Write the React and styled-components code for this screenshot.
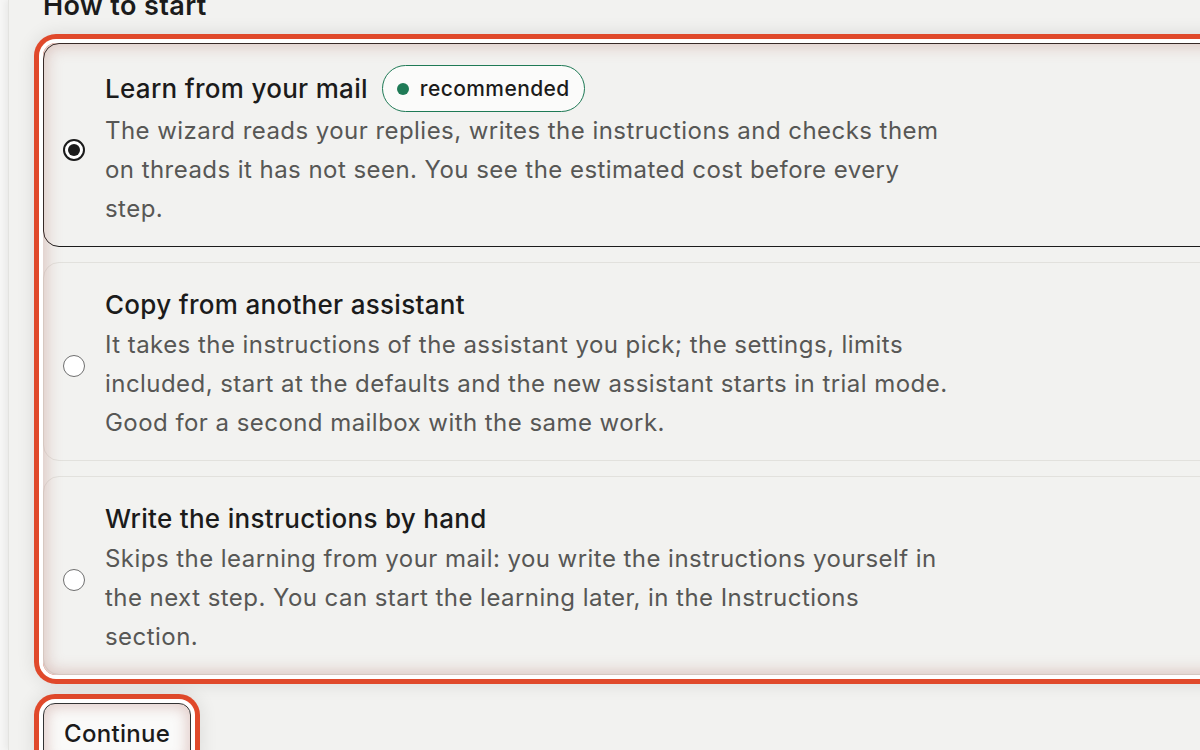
import React, { useState } from 'react'
import styled, { createGlobalStyle } from 'styled-components'

/* ========================================================================== */
const GlobalStyle = createGlobalStyle`
  html, body {
    margin: 0;
    height: 100%;
    overflow: hidden;
    background: #f6f6f5;
  }
  body {
    font-family: Inter, "Noto Sans", "Liberation Sans", sans-serif;
    color: #1b1b1b;
  }
`
const Page = styled.div`
  height: 750px;
  margin-left: 8px;
  padding-left: 34px;
  background: #f2f2f0;
  border-left: 1px solid #e3e3e0;
  box-shadow: -3px 0 6px rgba(0, 0, 0, 0.05);
  overflow: hidden;
`
const Heading = styled.h2`
  margin: -9px 0 22px 0;
  font-size: 27px;
  line-height: 30px;
  font-weight: 600;
  letter-spacing: 0.4px;
  color: #1b1b1b;
`
const OptionGroup = styled.div`
  position: relative;
  width: 1230px;
  display: flex;
  flex-direction: column;
  gap: 15px;
  border-radius: 13px;

  &::after {
    content: '';
    position: absolute;
    inset: 0;
    border-radius: 13px;
    pointer-events: none;
    box-shadow:
      0 0 0 4px #ffffff,
      0 0 0 9px #e0492b,
      0 0 18px 10px rgba(0, 0, 0, 0.09),
      inset 0 0 16px 3px rgba(170, 95, 85, 0.32);
  }
`
const OptionCard = styled.label`
  display: flex;
  align-items: center;
  gap: 20px;
  padding: 22px 19px 18px;
  border-radius: 16px;
  border: ${p => (p.$selected ? '1.5px solid #1c1c1c' : '1px solid #e2e1dd')};
  background: #f2f2f0;
  cursor: pointer;
`
const Radio = styled.span`
  flex-shrink: 0;
  box-sizing: border-box;
  width: 22px;
  height: 22px;
  margin-top: 5px;
  border-radius: 50%;
  background: #ffffff;
  border: ${p => (p.$checked ? '2px solid #1b1b1b' : '1.5px solid #6f6f6f')};
  display: flex;
  align-items: center;
  justify-content: center;

  &::after {
    content: '';
    display: ${p => (p.$checked ? 'block' : 'none')};
    width: 12px;
    height: 12px;
    border-radius: 50%;
    background: #1b1b1b;
  }
`
const OptionBody = styled.div`
  display: flex;
  flex-direction: column;
`
const TitleRow = styled.div`
  display: flex;
  align-items: center;
  gap: 14px;
  min-height: 40px;
`
const Title = styled.span`
  font-size: 26px;
  line-height: 40px;
  font-weight: 500;
  letter-spacing: 0.3px;
  color: #1b1b1b;
`
const Badge = styled.span`
  display: inline-flex;
  align-items: center;
  gap: 11px;
  box-sizing: border-box;
  height: 47px;
  margin: -1px 0;
  padding: 0 14px 0 14px;
  border-radius: 24px;
  border: 1.5px solid #1f7a56;
  background: #fbfbfa;
  font-size: 21px;
  font-weight: 500;
  letter-spacing: 0.4px;
  color: #1b1b1b;

  &::before {
    content: '';
    width: 12px;
    height: 12px;
    border-radius: 50%;
    background: #1f7a56;
  }
`
const Description = styled.p`
  margin: 0;
  max-width: 846px;
  font-size: 24px;
  line-height: 39px;
  letter-spacing: 0.45px;
  color: #575755;
`
const ButtonWrap = styled.div`
  margin-top: 28px;
`
const ContinueButton = styled.button`
  font-family: inherit;
  font-size: 24px;
  font-weight: 500;
  line-height: 32px;
  letter-spacing: 0.3px;
  color: #1b1b1b;
  padding: 14px 20px 16px;
  border-radius: 12px;
  border: 1.5px solid #333;
  background: #fafaf9;
  cursor: pointer;
  box-shadow:
    0 0 0 4px #ffffff,
    0 0 0 9px #e0492b,
    0 0 18px 10px rgba(0, 0, 0, 0.09),
    inset 0 0 14px 3px rgba(170, 95, 85, 0.3);
`
/* ========================================================================== */
const options = [
  {
    id: 'learn',
    title: 'Learn from your mail',
    badge: 'recommended',
    text: 'The wizard reads your replies, writes the instructions and checks them on threads it has not seen. You see the estimated cost before every step.',
  },
  {
    id: 'copy',
    title: 'Copy from another assistant',
    text: 'It takes the instructions of the assistant you pick; the settings, limits included, start at the defaults and the new assistant starts in trial mode. Good for a second mailbox with the same work.',
  },
  {
    id: 'hand',
    title: 'Write the instructions by hand',
    text: 'Skips the learning from your mail: you write the instructions yourself in the next step. You can start the learning later, in the Instructions section.',
  },
]

/* ========================================================================== */
export default function App() {
  const [choice, setChoice] = useState('learn')

  return (
    <>
      <GlobalStyle />
      <Page>
        <Heading>How to start</Heading>

        <OptionGroup role="radiogroup">
          {options.map(opt => (
            <OptionCard
              key={opt.id}
              $selected={choice === opt.id}
              onClick={() => setChoice(opt.id)}
            >
              <Radio $checked={choice === opt.id} role="radio" aria-checked={choice === opt.id} />
              <OptionBody>
                <TitleRow>
                  <Title>{opt.title}</Title>
                  {opt.badge && <Badge>{opt.badge}</Badge>}
                </TitleRow>
                <Description>{opt.text}</Description>
              </OptionBody>
            </OptionCard>
          ))}
        </OptionGroup>

        <ButtonWrap>
          <ContinueButton>Continue</ContinueButton>
        </ButtonWrap>
      </Page>
    </>
  )
}
